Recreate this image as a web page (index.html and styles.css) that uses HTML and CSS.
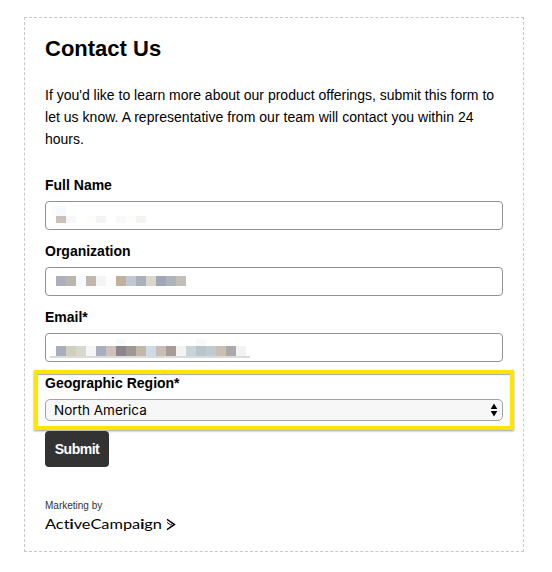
FILE: index.html
```
<!DOCTYPE html>
<html lang="en">
<head>
    <meta charset="UTF-8">
    <meta name="viewport" content="width=device-width, initial-scale=1.0">
    <title>Contact Us</title>
    <link rel="stylesheet" href="styles.css">
</head>
<body>
    <form class="contact-form">
        <h1>Contact Us</h1>
        <p class="intro">If you'd like to learn more about our product offerings, submit this form to<br><span class="line-two">let us know. A representative from our team will contact you within 24</span><br>hours.</p>

        <div class="field">
            <label>Full Name</label>
            <div class="input">
                <svg width="210" height="27" shape-rendering="crispEdges">
                    <path fill="#f9fcfa" d="M6 4h4v10H6z"/>
                    <path fill="#f4faff" d="M10 4h10v10H10z"/>
                    <path fill="#cbbfb7" d="M10 14h10v7H10z"/>
                    <path fill="#f7f7f9" d="M20 14h10v7H20z"/>
                    <path fill="#fdfdfa" d="M40 14h10v7H40zM80 14h10v7H80z"/>
                    <path fill="#f4f4f5" d="M50 14h10v7H50zM90 14h10v7H90z"/>
                    <path fill="#f9f9f9" d="M70 14h10v7H70z"/>
                </svg>
            </div>
        </div>

        <div class="field">
            <label>Organization</label>
            <div class="input">
                <svg width="210" height="27" shape-rendering="crispEdges">
                    <path fill="#abafbe" d="M10 8h10v10H10z"/>
                    <path fill="#bab6ad" d="M20 8h10v10H20z"/>
                    <path fill="#f4faff" d="M30 8h10v10H30z"/>
                    <path fill="#c0b7ac" d="M40 8h10v10H40z"/>
                    <path fill="#f4f4f5" d="M50 8h10v10H50z"/>
                    <path fill="#fdfdfd" d="M60 8h10v10H60z"/>
                    <path fill="#bfb19d" d="M70 8h10v10H70z"/>
                    <path fill="#c3c6d3" d="M80 8h10v10H80z"/>
                    <path fill="#aab0b9" d="M90 8h10v10H90z"/>
                    <path fill="#dbd8cb" d="M100 8h10v10h-10z"/>
                    <path fill="#a1a6b9" d="M110 8h10v10h-10z"/>
                    <path fill="#afb4bc" d="M120 8h10v10h-10z"/>
                    <path fill="#c5bdb8" d="M130 8h10v10h-10z"/>
                </svg>
            </div>
        </div>

        <div class="field">
            <label>Email*</label>
            <div class="input">
                <svg width="210" height="27" shape-rendering="crispEdges">
                    <path fill="#fafafa" d="M70 5h10v7H70zM150 5h10v7h-10z"/>
                    <path fill="#fcfcfa" d="M6 12h4v10H6z"/>
                    <path fill="#a9afba" d="M10 12h10v10H10z"/>
                    <path fill="#d0cfbe" d="M20 12h10v10H20z"/>
                    <path fill="#d9d6ca" d="M30 12h10v10H30z"/>
                    <path fill="#f5f5f5" d="M40 12h10v10H40z"/>
                    <path fill="#a8aebb" d="M50 12h10v10H50z"/>
                    <path fill="#cdc0bd" d="M60 12h10v10H60z"/>
                    <path fill="#8c868b" d="M70 12h10v10H70z"/>
                    <path fill="#9d9895" d="M80 12h10v10H80z"/>
                    <path fill="#c2b8a9" d="M90 12h10v10H90z"/>
                    <path fill="#cddae8" d="M100 12h10v10h-10z"/>
                    <path fill="#c9beb4" d="M110 12h10v10h-10z"/>
                    <path fill="#a69d98" d="M120 12h10v10h-10z"/>
                    <path fill="#f3f3f1" d="M130 12h10v10h-10z"/>
                    <path fill="#cad2da" d="M140 12h10v10h-10z"/>
                    <path fill="#b9c6c7" d="M150 12h10v10h-10z"/>
                    <path fill="#bfcbd1" d="M160 12h10v10h-10z"/>
                    <path fill="#cbbfb4" d="M170 12h10v10h-10z"/>
                    <path fill="#aca8aa" d="M180 12h10v10h-10z"/>
                    <path fill="#f2f2f0" d="M190 12h10v10h-10z"/>
                    <path fill="#dadada" d="M4 22h200v2H4z"/>
                </svg>
            </div>
        </div>

        <div class="field highlight">
            <label>Geographic Region*</label>
            <div class="select">
                <span>North America</span>
                <svg width="8" height="14" viewBox="0 0 8 14">
                    <path d="M4 .5L7.3 6H.7zM4 13.5L7.3 8H.7z"/>
                </svg>
            </div>
        </div>

        <button type="button" class="submit">Submit</button>

        <div class="marketing">Marketing by</div>
        <svg class="logo" width="132" height="20" viewBox="0 0 132 20">
            <text x="0" y="14" textLength="117" lengthAdjust="spacingAndGlyphs">Act<tspan class="heavy">i</tspan>veCampa<tspan class="heavy">i</tspan>gn</text>
            <path d="M122 4.4l7.5 5-7.5 5.2"/>
            <path class="thin" d="M122 7.4l3.6 2.4 2.2-1.4"/>
        </svg>
    </form>
</body>
</html>
```
FILE: styles.css
```
* {
    box-sizing: border-box;
}
body {
    margin: 0;
    background-color: #fff;
    color: #000;
    font-family: "Liberation Sans", Arial, sans-serif;
    font-size: 14px;
}
.contact-form {
    width: 500px;
    height: 535px;
    margin: 17px 0 0 24px;
    padding: 16px 20px;
    border: 1px dashed #c8c8c8;
}
h1 {
    margin: 0;
    font-size: 22px;
    line-height: 30px;
}
.intro {
    margin: 20px 0 24px;
    line-height: 22px;
    white-space: nowrap;
}
.line-two {
    letter-spacing: 0.03px;
}
.field {
    height: 66px;
}
label {
    display: block;
    height: 27px;
    line-height: 22px;
    font-weight: bold;
}
.input {
    width: 458px;
    height: 29px;
    border: 1px solid #929292;
    border-radius: 4px;
}
.input svg {
    display: block;
}
.highlight {
    width: 480px;
    height: 60px;
    margin: -2px 0 0 -11px;
    padding: 0 7px;
    border: 4px solid #ffe600;
    box-shadow: 0 1px 2px rgba(0, 0, 0, 0.4), inset 0 1px 1px rgba(0, 0, 0, 0.35);
}
.highlight label {
    height: 25px;
    line-height: 18px;
}
.select {
    display: flex;
    align-items: center;
    justify-content: space-between;
    width: 458px;
    height: 22px;
    padding: 0 4px 0 8px;
    border: 1px solid #a2a2a2;
    border-radius: 5px;
    background-color: #f7f7f7;
    font-family: Inter, sans-serif;
    font-size: 13.5px;
}
.submit {
    display: block;
    width: 64px;
    height: 36px;
    margin-top: 1px;
    padding: 0;
    border: 0;
    border-radius: 4px;
    background-color: #333;
    color: #fff;
    font: bold 14px "Liberation Sans", Arial, sans-serif;
    letter-spacing: -0.5px;
}
.marketing {
    margin-top: 32px;
    color: #333;
    font-size: 10px;
    line-height: 14px;
}
.logo {
    display: block;
    margin-top: 2px;
    overflow: visible;
}
.logo text {
    font-family: Lato, sans-serif;
    font-size: 14px;
    font-variant-ligatures: none;
}
.logo .heavy {
    font-weight: bold;
}
.logo path {
    fill: none;
    stroke: #000;
    stroke-width: 1.4;
}
.logo .thin {
    stroke-width: 1;
}
```
